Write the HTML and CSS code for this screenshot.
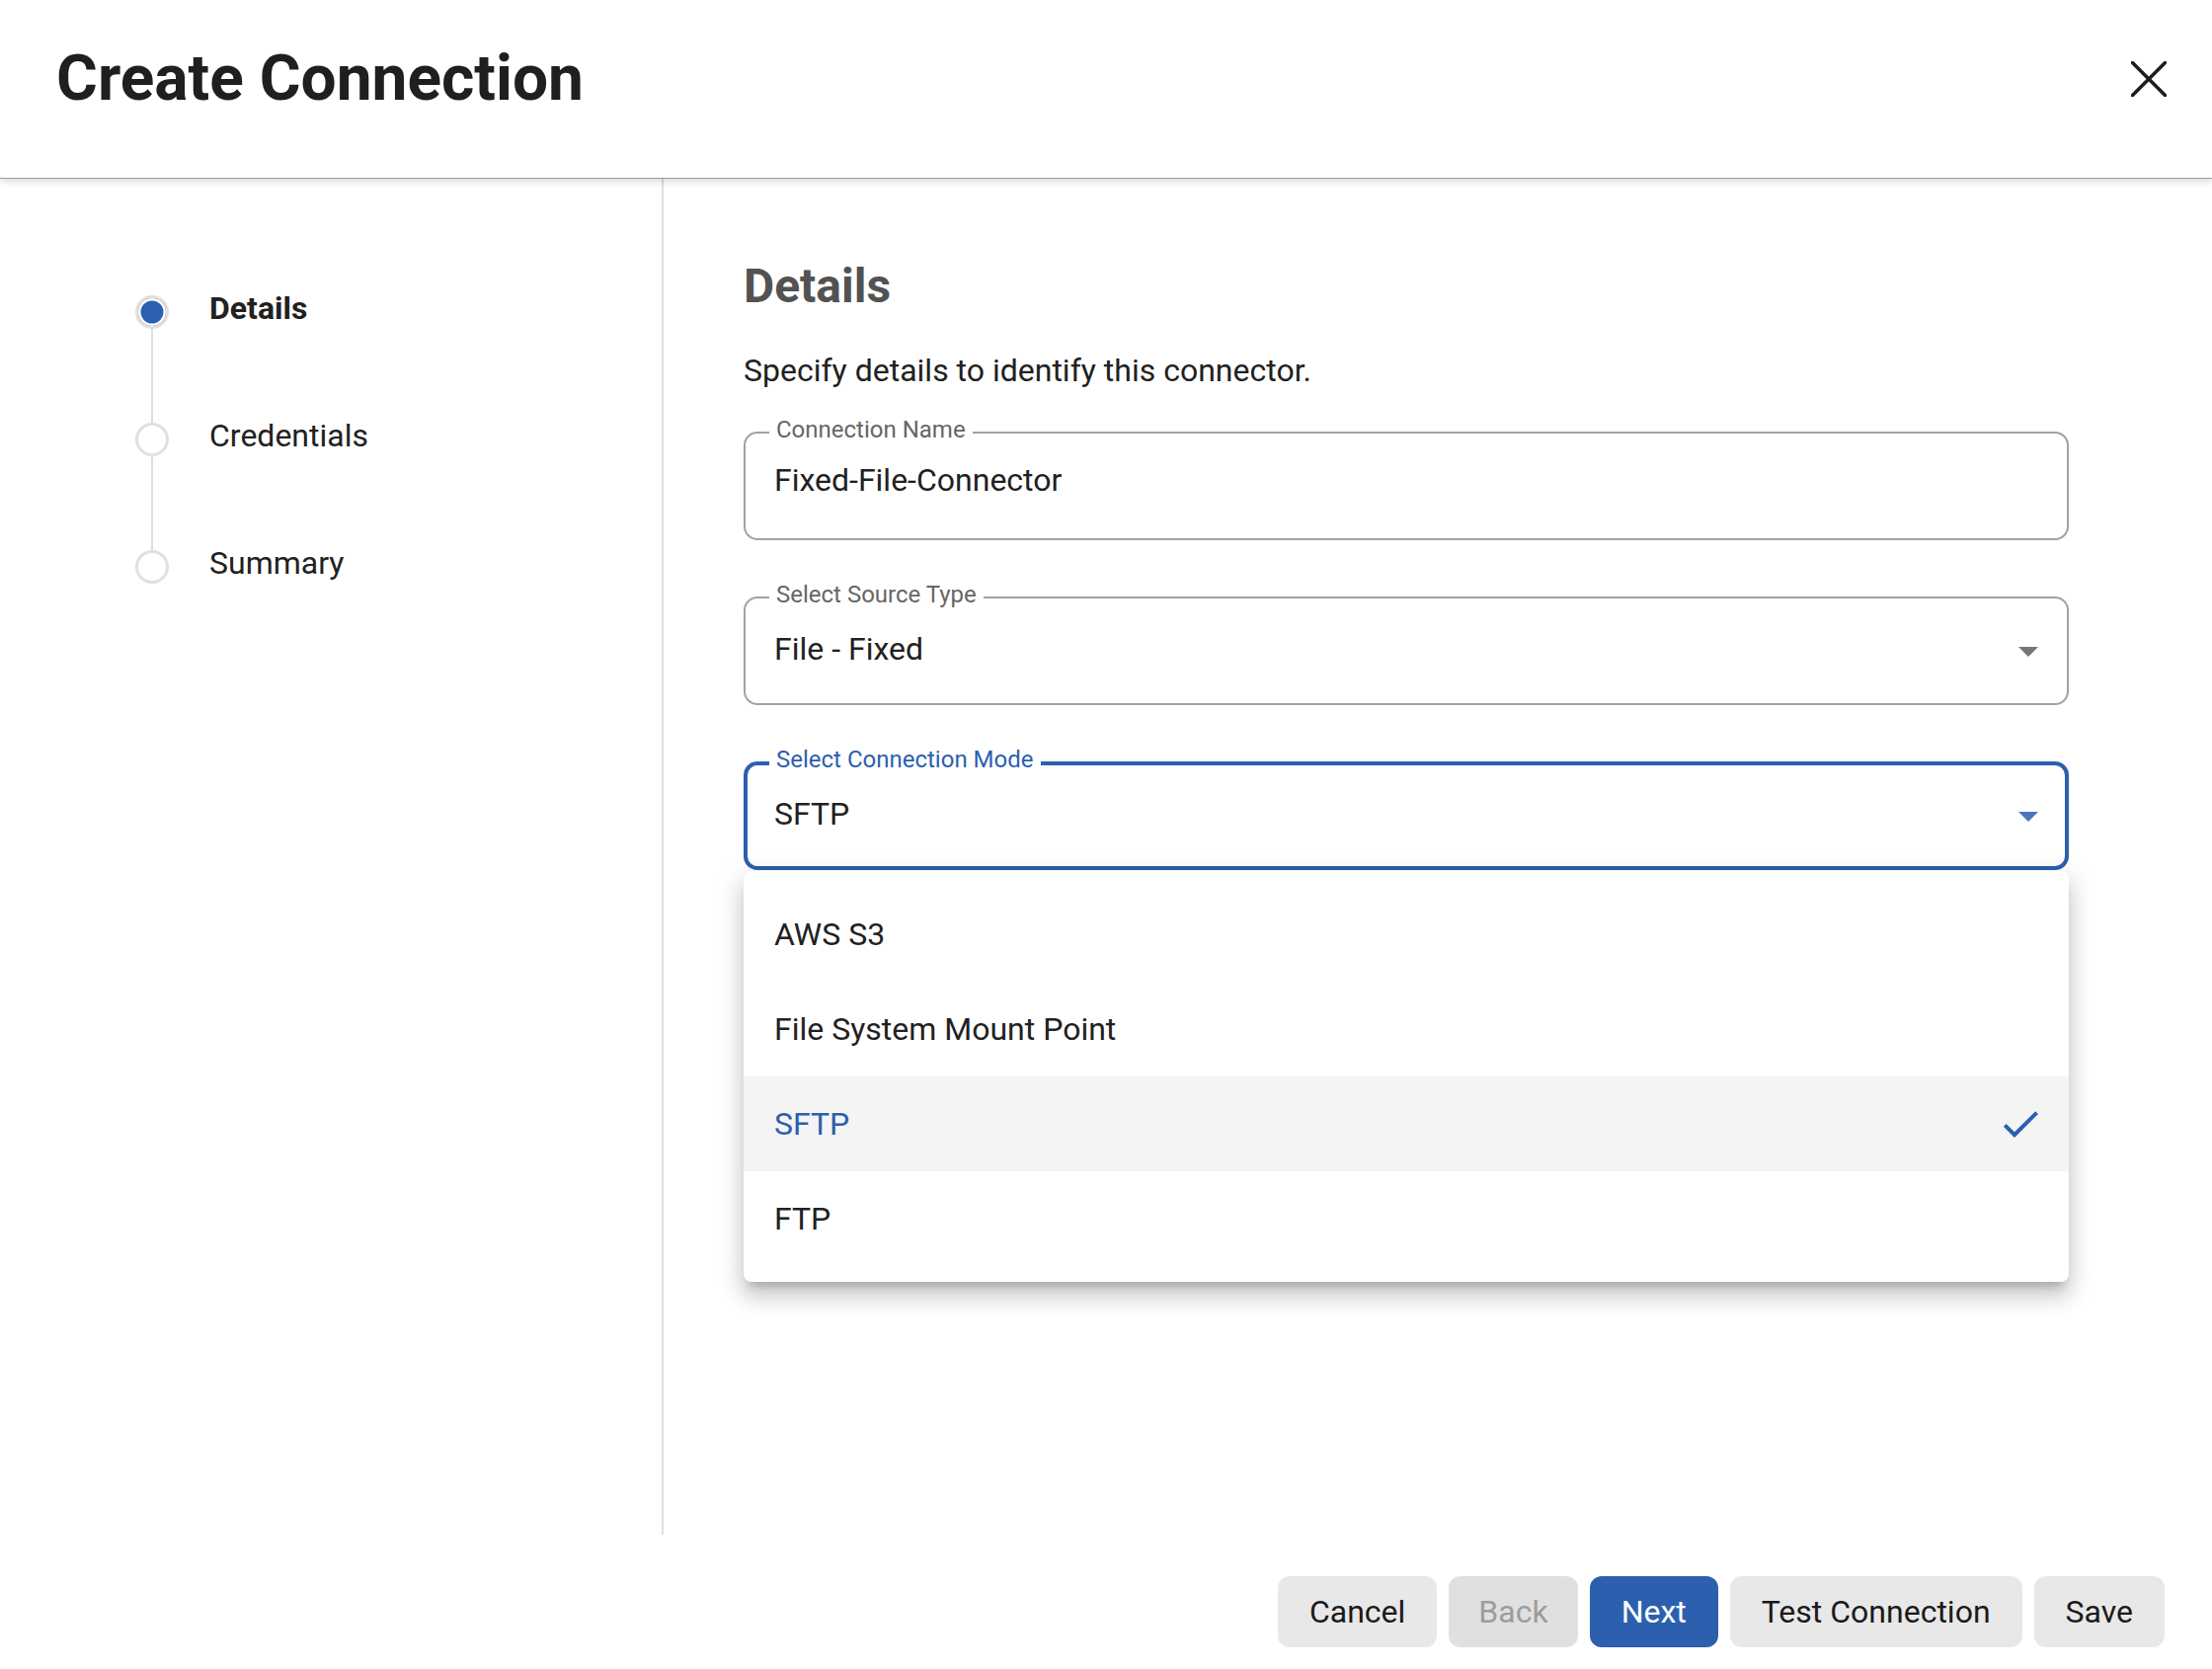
FILE: index.html
```html
<!DOCTYPE html>
<html lang="en">
<head>
    <meta charset="UTF-8">
    <title>Create Connection</title>
    <link rel="stylesheet" href="styles.css">
</head>
<body>
<div class="dialog">
    <header class="dialog-header">
        <h1>Create Connection</h1>
        <button class="close-btn" aria-label="Close">
            <svg width="36" height="36" viewBox="0 0 36 36">
                <line x1="1.5" y1="1.5" x2="34.5" y2="34.5" />
                <line x1="34.5" y1="1.5" x2="1.5" y2="34.5" />
            </svg>
        </button>
    </header>

    <div class="dialog-body">
        <nav class="stepper">
            <div class="step">
                <span class="step-icon active"></span>
                <span class="step-label current">Details</span>
            </div>
            <div class="step-line"></div>
            <div class="step">
                <span class="step-icon"></span>
                <span class="step-label">Credentials</span>
            </div>
            <div class="step-line"></div>
            <div class="step">
                <span class="step-icon"></span>
                <span class="step-label">Summary</span>
            </div>
        </nav>

        <main class="content">
            <h2>Details</h2>
            <p class="intro">Specify details to identify this connector.</p>

            <div class="field text-field">
                <label>Connection Name</label>
                <span class="field-value">Fixed-File-Connector</span>
            </div>

            <div class="field select-field">
                <label>Select Source Type</label>
                <span class="field-value">File - Fixed</span>
                <svg class="arrow" width="48" height="48" viewBox="0 0 24 24"><path d="M7 10l5 5 5-5z"/></svg>
            </div>

            <div class="select-wrap">
                <div class="field select-field focused">
                    <label>Select Connection Mode</label>
                    <span class="field-value">SFTP</span>
                    <svg class="arrow" width="48" height="48" viewBox="0 0 24 24"><path d="M7 10l5 5 5-5z"/></svg>
                </div>
                <ul class="menu">
                    <li>AWS S3</li>
                    <li>File System Mount Point</li>
                    <li class="selected">SFTP
                        <svg width="48" height="48" viewBox="0 0 24 24"><path d="M9 16.17 4.83 12l-1.42 1.41L9 19 21 7l-1.41-1.41z"/></svg>
                    </li>
                    <li>FTP</li>
                </ul>
            </div>
        </main>
    </div>

    <footer class="dialog-actions">
        <button class="btn">Cancel</button>
        <button class="btn back" disabled>Back</button>
        <button class="btn primary">Next</button>
        <button class="btn">Test Connection</button>
        <button class="btn">Save</button>
    </footer>
</div>
</body>
</html>
```

FILE: styles.css
```css
* {
    box-sizing: border-box;
}
body {
    margin: 0;
    font-family: Roboto, "Noto Sans", sans-serif;
    color: #212121;
    background: #fff;
}
.dialog {
    display: flex;
    flex-direction: column;
    width: 2240px;
    height: 1690px;
}

/* header */
.dialog-header {
    position: relative;
    z-index: 2;
    display: flex;
    align-items: center;
    justify-content: space-between;
    height: 180px;
    padding: 0 46px 20px 57px;
    background: #fff;
    box-shadow: 0 1px 0 #9c9c9c, 0 3px 8px rgba(0, 0, 0, 0.18);
}
.dialog-header h1 {
    margin: 0;
    font-size: 64px;
    line-height: 1.2;
    font-weight: 700;
    color: #1f1f1f;
}
.close-btn {
    display: flex;
    padding: 0;
    border: none;
    background: none;
}
.close-btn line {
    stroke: #1e1e1e;
    stroke-width: 3.6;
    stroke-linecap: round;
}

/* body */
.dialog-body {
    flex: 1;
    display: flex;
}
.stepper {
    width: 672px;
    flex-shrink: 0;
    padding: 119px 0 0 137px;
    border-right: 2px solid #dedede;
}
.step {
    display: flex;
    align-items: center;
    height: 34px;
}
.step-icon {
    width: 34px;
    height: 34px;
    border-radius: 50%;
    border: 3px solid #e0e0e0;
    background: #fff;
}
.step-icon.active {
    background: #2c5fae;
    box-shadow: inset 0 0 0 2.5px #fff;
}
.step-label {
    margin-left: 41px;
    padding-bottom: 8px;
    font-size: 32px;
    line-height: 1.2;
    white-space: nowrap;
}
.step-label.current {
    font-weight: 700;
}
.step-line {
    width: 2px;
    height: 95px;
    margin-left: 16px;
    background: #dedede;
}

.content {
    flex: 1;
    padding: 81px 145px 0 81px;
}
.content h2 {
    margin: 0;
    font-size: 48px;
    line-height: 1.2;
    font-weight: 700;
    color: #525252;
}
.intro {
    margin: 37px 0 43px;
    font-size: 32px;
    line-height: 1.2;
}

/* outlined fields */
.field {
    position: relative;
    display: flex;
    align-items: center;
    height: 110px;
    margin-bottom: 57px;
    padding: 0 15px 0 29px;
    border: 2px solid #a2a2a2;
    border-radius: 14px;
}
.field label {
    position: absolute;
    top: -16px;
    left: 24px;
    padding: 0 7px;
    background: #fff;
    font-size: 24px;
    line-height: 24px;
    color: #666;
}
.field-value {
    flex: 1;
    font-size: 32px;
    line-height: 1.2;
    color: #212121;
}
.text-field .field-value {
    padding-bottom: 12px;
}
.select-field .field-value {
    padding-bottom: 4px;
}
.arrow {
    fill: #757575;
}
.field.focused {
    padding: 0 13px 0 27px;
    border: 4px solid #2c5fae;
}
.field.focused label {
    top: -18px;
    left: 22px;
    color: #2c5fae;
}
.field.focused .arrow {
    fill: #4a76bd;
}

/* dropdown */
.select-wrap {
    position: relative;
}
.menu {
    position: absolute;
    z-index: 3;
    top: 111px;
    left: 0;
    right: 0;
    margin: 0;
    padding: 16px 0;
    list-style: none;
    background: #fff;
    border-radius: 8px;
    box-shadow: 0 10px 10px -6px rgba(0, 0, 0, 0.2), 0 16px 20px 2px rgba(0, 0, 0, 0.12), 0 6px 28px 4px rgba(0, 0, 0, 0.1);
}
.menu li {
    display: flex;
    align-items: center;
    justify-content: space-between;
    height: 96px;
    padding: 0 25px 0 31px;
    font-size: 32px;
    line-height: 1.2;
    color: #212121;
}
.menu li.selected {
    background: #f4f4f4;
    color: #2c5fae;
}
.menu li svg {
    fill: #2c5fae;
}

/* footer */
.dialog-actions {
    display: flex;
    justify-content: flex-end;
    align-items: flex-start;
    gap: 12px;
    height: 136px;
    padding: 42px 48px 0 0;
}
.btn {
    height: 72px;
    padding: 0 32px;
    border: none;
    border-radius: 12px;
    background: #e8e8e8;
    font-family: Roboto, "Noto Sans", sans-serif;
    font-size: 32px;
    color: #1a1a1a;
}
.btn.back {
    padding: 0 30px;
}
.btn:disabled {
    background: #e0e0e0;
    color: #9c9c9c;
}
.btn.primary {
    background: #2c5fae;
    color: #fff;
}
```
